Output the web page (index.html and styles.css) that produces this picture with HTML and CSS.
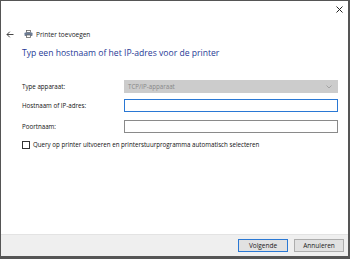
FILE: index.html
```html
<!DOCTYPE html>
<html lang="nl">
<head>
    <meta charset="UTF-8">
    <title>Printer toevoegen</title>
    <link rel="stylesheet" href="styles.css">
</head>
<body>
    <div class="window">
        <div class="titlebar">
            <svg class="close" width="7" height="7" viewBox="0 0 7 7">
                <path d="M0.5 0.5 L6.5 6.5 M6.5 0.5 L0.5 6.5" stroke="#222" stroke-width="1" fill="none"/>
            </svg>
        </div>
        <div class="nav">
            <svg class="back" width="8" height="7" viewBox="0 0 8 7">
                <path d="M7.5 3.5 H1 M3.8 0.7 L1 3.5 L3.8 6.3" stroke="#333" stroke-width="0.9" fill="none"/>
            </svg>
            <svg class="printer" width="9" height="8" viewBox="0 0 9 8">
                <rect x="2.5" y="0.5" width="4" height="2" fill="#fff" stroke="#666" stroke-width="0.8"/>
                <rect x="0.5" y="2.5" width="8" height="3.5" rx="0.8" fill="#6c7c96"/>
                <rect x="2.5" y="5" width="4" height="2.5" fill="#fff" stroke="#666" stroke-width="0.8"/>
            </svg>
            <span class="nav-title">Printer toevoegen</span>
        </div>
        <div class="content">
            <h1 class="heading">Typ een hostnaam of het IP-adres voor de printer</h1>
            <div class="form">
                <div class="row row-select">
                    <label>Type apparaat:</label>
                    <div class="select">
                        <span>TCP/IP-apparaat</span>
                        <svg width="6" height="4" viewBox="0 0 6 4">
                            <path d="M0.5 0.5 L3 3 L5.5 0.5" stroke="#999" stroke-width="0.8" fill="none"/>
                        </svg>
                    </div>
                </div>
                <div class="row">
                    <label>Hostnaam of IP-adres:</label>
                    <div class="input focused"></div>
                </div>
                <div class="row">
                    <label>Poortnaam:</label>
                    <div class="input"></div>
                </div>
                <div class="check-row">
                    <span class="checkbox"></span>
                    <span>Query op printer uitvoeren en printerstuurprogramma automatisch selecteren</span>
                </div>
            </div>
        </div>
        <div class="footer">
            <button class="btn primary">Volgende</button>
            <button class="btn">Annuleren</button>
        </div>
    </div>
</body>
</html>
```

FILE: styles.css
```css
body {
    margin: 0;
    font-family: "Open Sans", "Noto Sans", sans-serif;
    color: #1a1a1a;
    background-color: #fff;
}
.window {
    width: 350px;
    height: 259px;
    box-sizing: border-box;
    border-style: solid;
    border-color: #555;
    border-width: 1px 2px 3px 1px;
    display: flex;
    flex-direction: column;
    background-color: #fff;
}
.titlebar {
    height: 16px;
    display: flex;
    justify-content: flex-end;
    align-items: center;
    padding-right: 5px;
}
.nav {
    display: flex;
    align-items: center;
    height: 12px;
    margin-top: 11px;
    padding-left: 5px;
}
.back {
    margin-right: 10px;
}
.printer {
    margin-right: 3px;
}
.nav-title {
    font-size: 6.5px;
    color: #222;
}
.content {
    padding: 0 10px 0 21px;
}
.heading {
    margin: 6px 0 0 0;
    font-size: 8.6px;
    font-weight: normal;
    color: #273a96;
    line-height: 14px;
}
.form {
    margin-top: 20px;
    font-size: 6.2px;
    color: #111;
}
.row {
    display: flex;
    align-items: center;
}
.row-select {
    margin-bottom: 6px;
}
.row + .row {
    margin-bottom: 8px;
}
.row label {
    width: 102px;
}
.select {
    flex: 1;
    height: 11px;
    background-color: #ccc;
    border: 1px solid #ccc;
    color: #888;
    display: flex;
    align-items: center;
    justify-content: space-between;
    padding: 0 5px 0 3px;
}
.input {
    flex: 1;
    height: 11px;
    border: 1px solid #8a8a8a;
}
.input.focused {
    border-color: #2a78d4;
}
.check-row {
    display: flex;
    align-items: center;
    margin-top: -1px;
}
.checkbox {
    width: 6px;
    height: 6px;
    border: 1px solid #333;
    margin-right: 3px;
}
.footer {
    margin-top: auto;
    height: 21px;
    background-color: #efefef;
    border-top: 1px solid #e3e3e3;
    display: flex;
    justify-content: flex-end;
    align-items: center;
    gap: 6px;
    padding-right: 4px;
}
.btn {
    width: 50px;
    height: 13px;
    padding: 0;
    font-family: "Open Sans", "Noto Sans", sans-serif;
    font-size: 6.5px;
    color: #1a1a1a;
    background-color: #e1e1e1;
    border: 1px solid #adadad;
}
.btn.primary {
    border-color: #2a78d4;
}
```
